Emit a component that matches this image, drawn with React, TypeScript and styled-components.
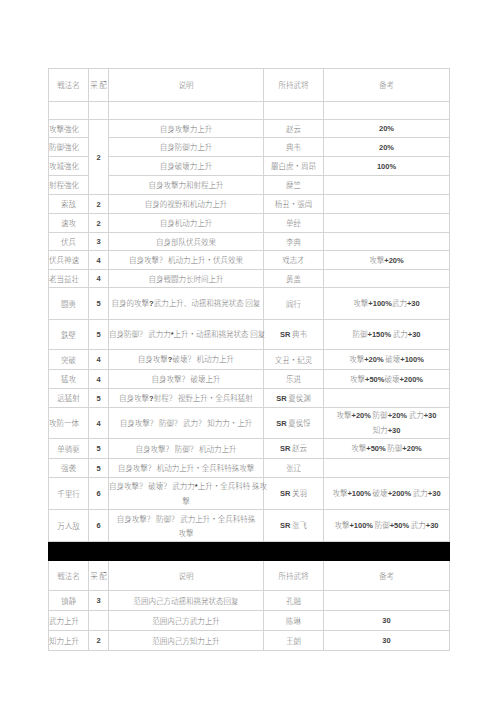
import React from "react";
import styled, { createGlobalStyle } from "styled-components";

const Global = createGlobalStyle`
  html, body { margin: 0; padding: 0; background: #ffffff; }
  body { font-family: "Noto Sans CJK SC", "Noto Sans", sans-serif; }
`;

const Page = styled.div`
  width: 500px;
  height: 708px;
  box-sizing: border-box;
  padding: 68px 0 0 48px;
  background: #ffffff;
`;

const Table = styled.table`
  border-collapse: collapse;
  table-layout: fixed;
  width: 401px;
`;

const Row = styled.tr<{ $h: number }>`
  height: ${(p) => p.$h}px;
`;

const Cell = styled.td<{ $align?: "left" | "center" }>`
  border: 1px solid #d4d4d4;
  padding: 0;
  vertical-align: middle;
  text-align: ${(p) => p.$align ?? "center"};
  font-family: "Noto Sans CJK SC", "Noto Sans CJK JP", sans-serif;
  font-size: 7.5px;
  font-weight: 300;
  line-height: 14px;
  color: #777777;
  white-space: nowrap;
  overflow: visible;
`;

const HeadCell = styled(Cell)`
  color: #7d7d7d;
`;

const BlackCell = styled.td`
  background: #000000;
  border: 1px solid #000000;
  padding: 0;
`;

const Num = styled.span`
  font-family: "Liberation Sans", Arial, sans-serif;
  font-weight: 700;
  color: #444444;
  font-size: 7.5px;
`;

const Line = styled.div``;

const Rich = ({ text }: { text: string }) => {
  const parts = text.match(/[A-Za-z0-9+%*?]+|[^A-Za-z0-9+%*?]+/g) ?? [];
  return (
    <>
      {parts.map((p, i) =>
        /[A-Za-z0-9+%*?]/.test(p[0]) ? <Num key={i}>{p}</Num> : <React.Fragment key={i}>{p}</React.Fragment>
      )}
    </>
  );
};

const Multi = ({ text }: { text: string }) => {
  const lines = text.split("\n");
  if (lines.length === 1) return <Rich text={text} />;
  return (
    <>
      {lines.map((l, i) => (
        <Line key={i}>
          <Rich text={l} />
        </Line>
      ))}
    </>
  );
};

type Data = {
  name: string;
  left?: boolean;
  num?: string;
  span?: number;
  skip?: boolean;
  desc: string;
  gen: string;
  note: string;
  h: number;
};

const rows1: Data[] = [
  { name: "", num: "", desc: "", gen: "", note: "", h: 18 },
  { name: "攻撃強化", left: true, num: "2", span: 4, desc: "自身攻撃力上升", gen: "赵云", note: "20%", h: 18 },
  { name: "防御強化", left: true, skip: true, desc: "自身防御力上升", gen: "典韦", note: "20%", h: 19 },
  { name: "攻城強化", left: true, skip: true, desc: "自身破壊力上升", gen: "嚴白虎・周昂", note: "100%", h: 19 },
  { name: "射程強化", left: true, skip: true, desc: "自身攻撃力和射程上升", gen: "糜竺", note: "", h: 19 },
  { name: "索敌", num: "2", desc: "自身的视野和机动力上升", gen: "杨丑・張闿", note: "", h: 19 },
  { name: "速攻", num: "2", desc: "自身机动力上升", gen: "单经", note: "", h: 19 },
  { name: "伏兵", num: "3", desc: "自身部队伏兵效果", gen: "李典", note: "", h: 18 },
  { name: "伏兵神速", left: true, num: "4", desc: "自身攻撃？ 机动力上升・伏兵效果", gen: "戏志才", note: "攻撃+20%", h: 19 },
  { name: "老当益壮", left: true, num: "4", desc: "自身戦闘力长时间上升", gen: "黄盖", note: "", h: 18 },
  { name: "闘勇", num: "5", desc: "自身的攻撃?武力上升、动揺和挑発状态 回复", gen: "阎行", note: "攻撃+100%武力+30", h: 32 },
  { name: "鉄壁", num: "5", desc: "自身防御？ 武力力*上升・动揺和挑発状态 回复", gen: "SR 典韦", note: "防御+150% 武力+30", h: 30 },
  { name: "突破", num: "4", desc: "自身攻撃?破壊？ 机动力上升", gen: "文丑・纪灵", note: "攻撃+20% 破壊+100%", h: 20 },
  { name: "猛攻", num: "4", desc: "自身攻撃？ 破壊上升", gen: "乐进", note: "攻撃+50%破壊+200%", h: 19 },
  { name: "远猛射", num: "5", desc: "自身攻撃?射程？ 视野上升・全兵科猛射", gen: "SR 夏侯渊", note: "", h: 19 },
  { name: "攻防一体", left: true, num: "4", desc: "自身攻撃？ 防御？ 武力？ 知力力・上升", gen: "SR 夏侯惇", note: "攻撃+20% 防御+20% 武力+30\n知力+30", h: 31 },
  { name: "单骑驱", num: "5", desc: "自身攻撃？ 防御？ 机动力上升", gen: "SR 赵云", note: "攻撃+50% 防御+20%", h: 20 },
  { name: "强袭", num: "5", desc: "自身攻撃？ 机动力上升・全兵科特殊攻撃", gen: "张辽", note: "", h: 19 },
  { name: "千里行", num: "6", desc: "自身攻撃？ 破壊？ 武力力*上升・全兵科特 殊攻\n撃", gen: "SR 关羽", note: "攻撃+100% 破壊+200% 武力+30", h: 32 },
  { name: "万人敌", num: "6", desc: "自身攻撃？ 防御？ 武力上升・全兵科特殊\n攻撃", gen: "SR 张飞", note: "攻撃+100% 防御+50% 武力+30", h: 32 },
];

const rows2: Data[] = [
  { name: "镇静", num: "3", desc: "范囲内己方动揺和挑発状态回复", gen: "孔融", note: "", h: 20 },
  { name: "武力上升", left: true, num: "", desc: "范囲内己方武力上升", gen: "陈琳", note: "30", h: 20 },
  { name: "知力上升", left: true, num: "2", desc: "范囲内己方知力上升", gen: "王朗", note: "30", h: 20 },
];

const Header = ({ h }: { h: number }) => (
  <Row $h={h}>
    <HeadCell>戦法名</HeadCell>
    <HeadCell>采 配</HeadCell>
    <HeadCell>说明</HeadCell>
    <HeadCell>所持武将</HeadCell>
    <HeadCell>备考</HeadCell>
  </Row>
);

const DataRow = ({ r }: { r: Data }) => (
  <Row $h={r.h}>
    <Cell $align={r.left ? "left" : "center"}>{r.name}</Cell>
    {!r.skip && (
      <Cell rowSpan={r.span}>
        <Num>{r.num}</Num>
      </Cell>
    )}
    <Cell>
      <Multi text={r.desc} />
    </Cell>
    <Cell>
      <Rich text={r.gen} />
    </Cell>
    <Cell>
      <Multi text={r.note} />
    </Cell>
  </Row>
);

export default function App() {
  return (
    <>
      <Global />
      <Page>
        <Table>
          <colgroup>
            <col style={{ width: 40 }} />
            <col style={{ width: 20 }} />
            <col style={{ width: 155 }} />
            <col style={{ width: 60 }} />
            <col style={{ width: 126 }} />
          </colgroup>
          <tbody>
            <Header h={33} />
            {rows1.map((r, i) => (
              <DataRow key={i} r={r} />
            ))}
            <Row $h={19}>
              <BlackCell colSpan={5} />
            </Row>
            <Header h={30} />
            {rows2.map((r, i) => (
              <DataRow key={"b" + i} r={r} />
            ))}
          </tbody>
        </Table>
      </Page>
    </>
  );
}
